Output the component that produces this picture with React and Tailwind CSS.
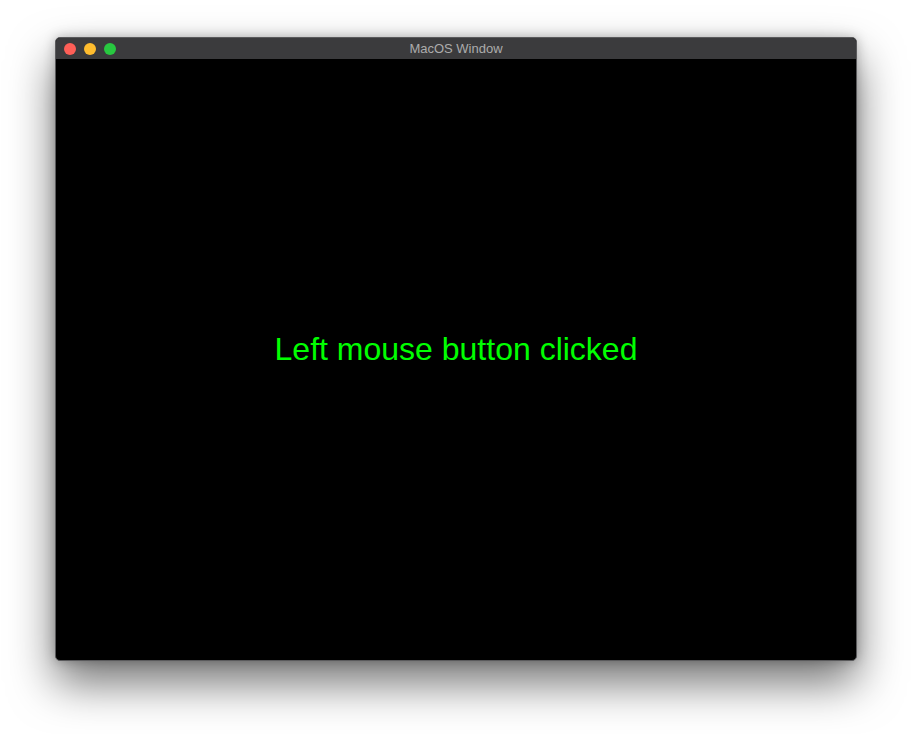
export default function App() {
  return (
    <div className="w-[912px] h-[734px] bg-white pt-[37px] pl-[55px]" style={{ fontFamily: '"Liberation Sans", Arial, sans-serif' }}>
      <div className="w-[802px] h-[624px] rounded-[5px] border border-[#5a5a5c] bg-black flex flex-col overflow-hidden shadow-[0_22px_45px_rgba(0,0,0,0.55),0_0_12px_rgba(0,0,0,0.25)]">
        <div className="h-[21px] bg-[#3b3b3d] flex items-center relative shrink-0">
          <div className="flex items-center gap-[8px] pl-[8px]">
            <div className="w-[12px] h-[12px] rounded-full bg-[#fe5f57]" />
            <div className="w-[12px] h-[12px] rounded-full bg-[#febc2e]" />
            <div className="w-[12px] h-[12px] rounded-full bg-[#28c840]" />
          </div>
          <div className="absolute inset-0 flex items-center justify-center pt-[1px] text-[13px] text-[#acacac] pointer-events-none">MacOS Window</div>
        </div>
        <div className="flex-1 flex items-center justify-center pb-[22px]">
          <span className="text-[32px] text-[#00ff00] leading-none">Left mouse button clicked</span>
        </div>
      </div>
    </div>
  );
}
